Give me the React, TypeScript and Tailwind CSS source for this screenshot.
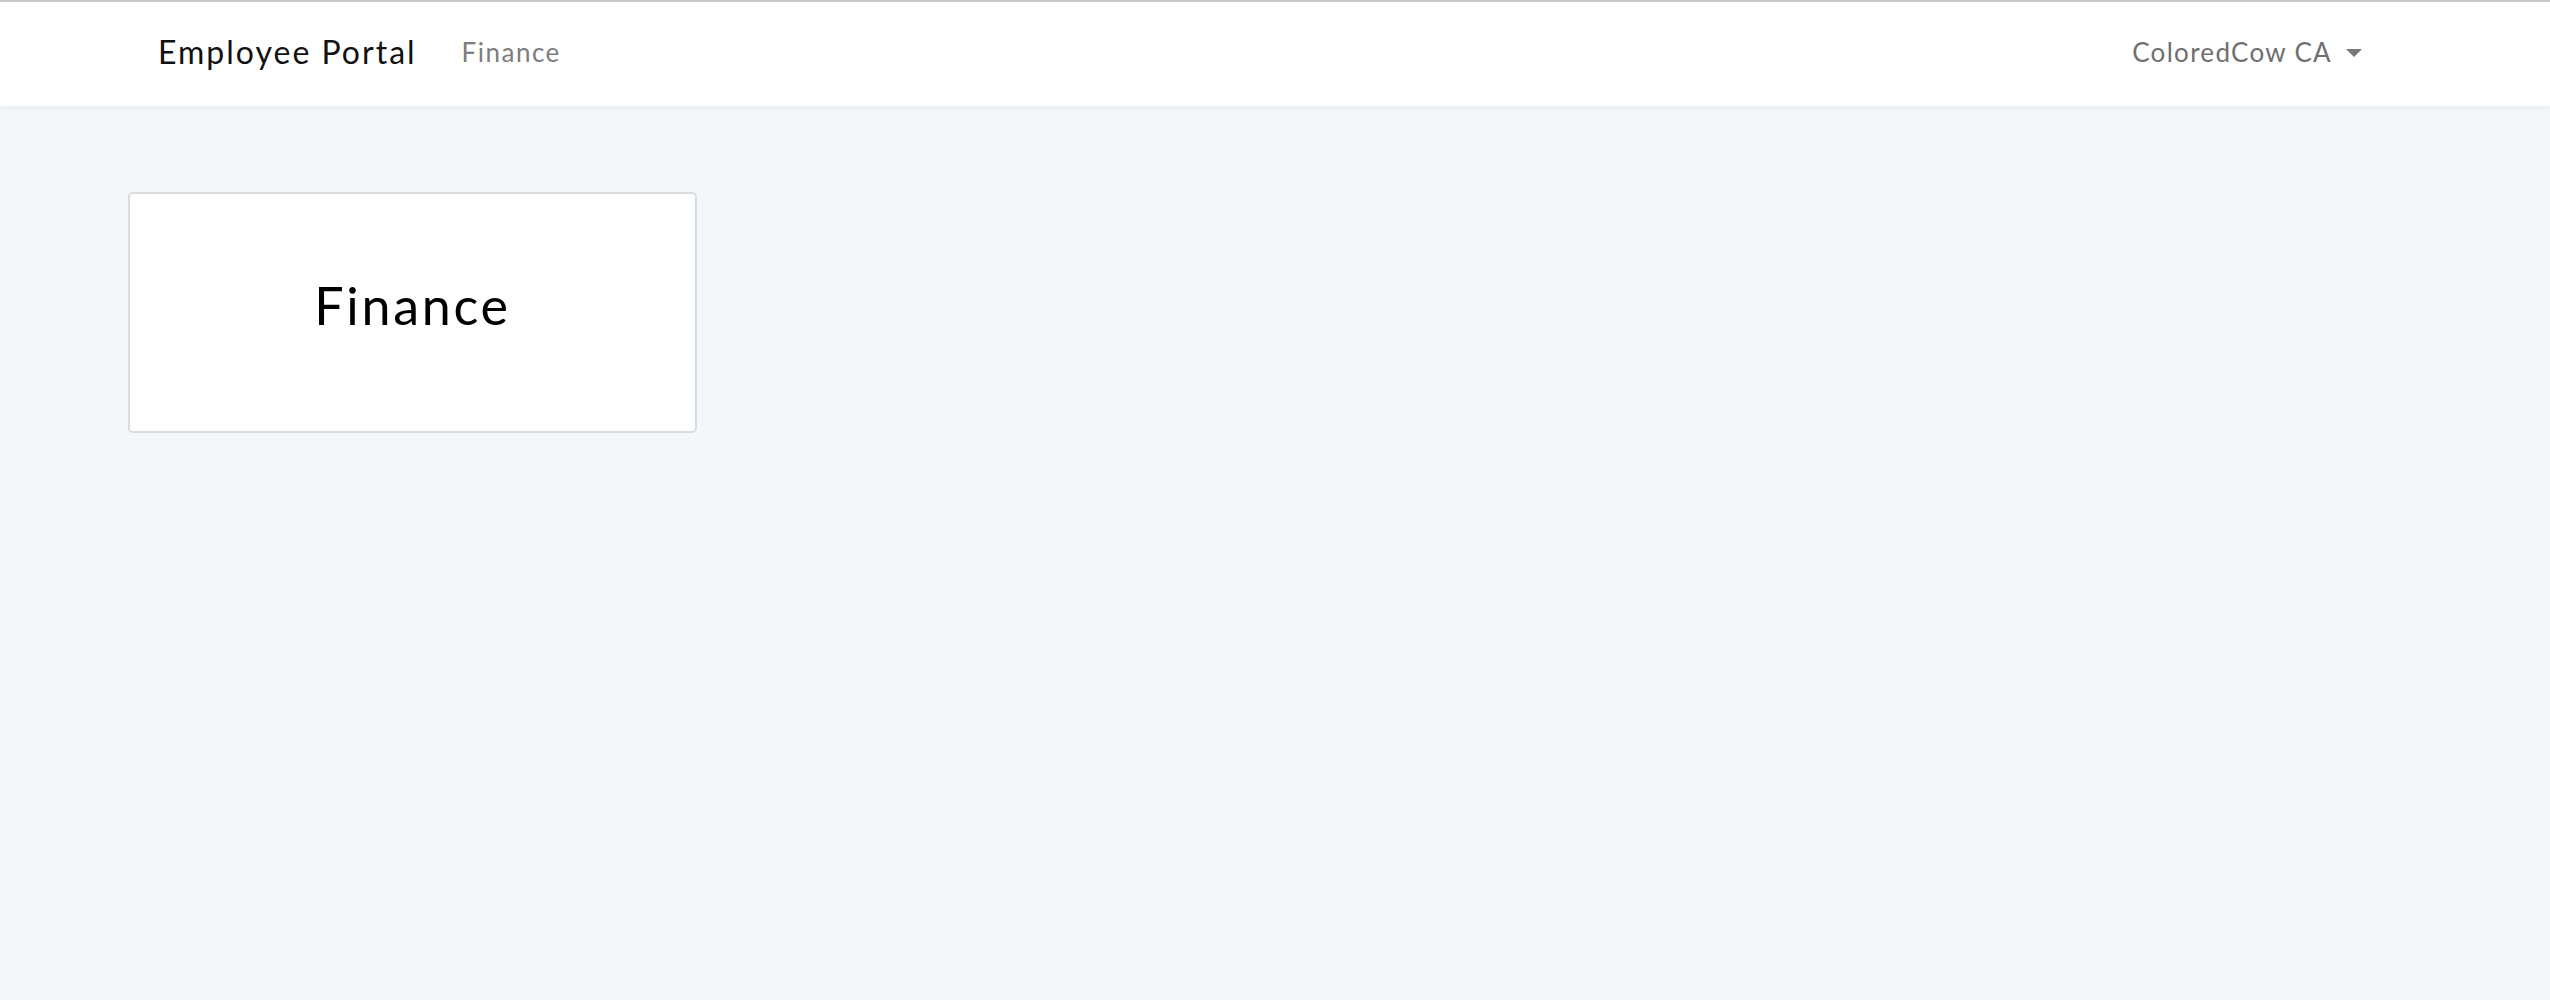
import { useState } from "react";

const navItems = [{ label: "Finance", href: "#finance" }];

const Navbar = () => {
  const [isOpen, setIsOpen] = useState(false);

  return (
    <header className="relative z-10 border-t-2 border-[#c9c9c9] bg-white shadow-[0_2px_6px_rgba(0,0,0,0.05)]">
      <div className="flex h-[104px] items-center justify-between pb-[4px] pl-[158px] pr-[188px]">
        <div className="flex items-center gap-[45px]">
          <a href="#" className="text-[32px] tracking-[2px] text-[#111]">
            Employee Portal
          </a>
          <nav className="flex items-center">
            {navItems.map((item) => (
              <a key={item.label} href={item.href} className="text-[26px] tracking-[1.5px] text-[#7d7d7d]">
                {item.label}
              </a>
            ))}
          </nav>
        </div>

        <button
          type="button"
          className="flex items-center gap-[14px] text-[26px] tracking-[1.3px] text-[#6f6f6f]"
          onClick={() => setIsOpen((current) => !current)}
        >
          ColoredCow CA
          <svg width="16" height="8" viewBox="0 0 16 8" className="mt-[2px]">
            <path d="M0 0h16L8 8z" fill="#777" />
          </svg>
        </button>
      </div>
    </header>
  );
};

export default function App() {
  return (
    <div className="min-h-[1000px] bg-[#f4f7fa] font-['Lato','Liberation_Sans',sans-serif]">
      <Navbar />
      <main className="px-[128px] pt-[86px]">
        <a
          href="#finance"
          className="flex h-[241px] w-[569px] items-center justify-center rounded-[5px] border-2 border-[#dadbdd] bg-white pb-[16px] text-[52px] tracking-[2.7px] text-black"
        >
          Finance
        </a>
      </main>
    </div>
  );
}
